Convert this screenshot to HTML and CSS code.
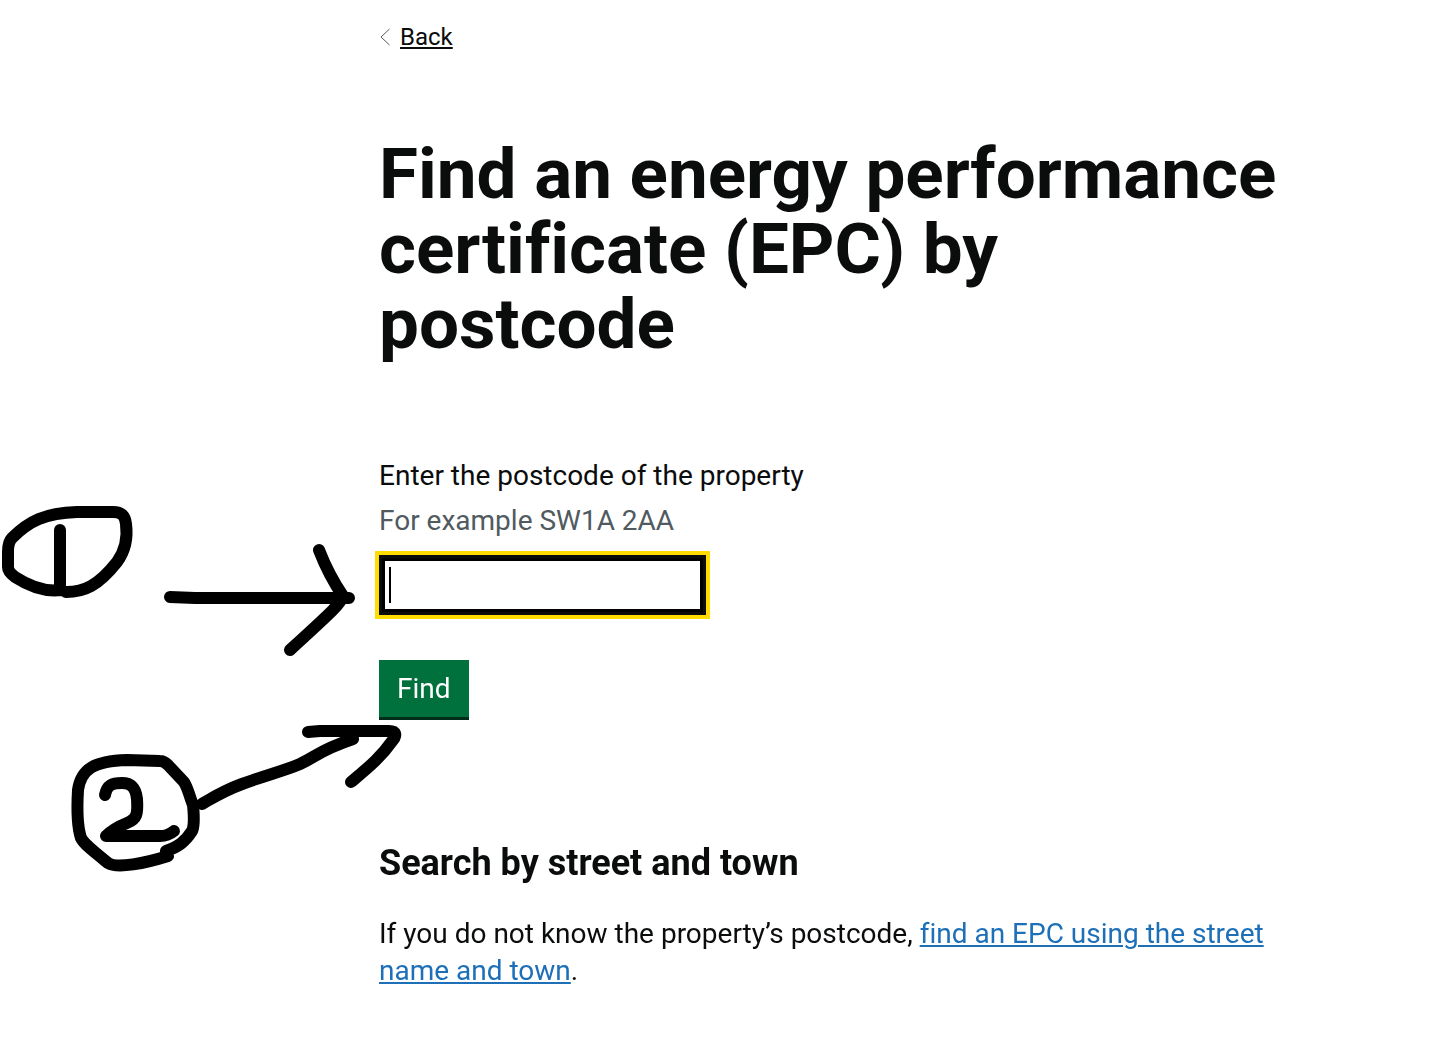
FILE: index.html
```
<!DOCTYPE html>
<html lang="en">
<head>
    <meta charset="UTF-8">
    <meta name="viewport" content="width=device-width, initial-scale=1.0">
    <title>Find an energy performance certificate (EPC) by postcode</title>
    <link rel="stylesheet" href="styles.css">
</head>
<body>
    <div class="container">
        <a href="#" class="back-link">
            <svg class="back-icon" width="11" height="18" viewBox="0 0 11 18" aria-hidden="true">
                <path d="M10.5 1 L2 9 L10.5 17"/>
            </svg>
            <span>Back</span>
        </a>

        <main>
            <h1>Find an energy performance certificate (EPC) by postcode</h1>

            <!-- Postcode Form -->
            <form class="postcode-form">
                <label for="postcode">Enter the postcode of the property</label>
                <div class="hint" id="postcodeHint">For example SW1A 2AA</div>
                <input type="text" id="postcode" aria-describedby="postcodeHint" autofocus>
                <button type="submit">Find</button>
            </form>

            <h2>Search by street and town</h2>
            <p>If you do not know the property’s postcode, <a href="#">find an EPC using the street name and town</a>.</p>
        </main>
    </div>

    <!-- Hand drawn steps -->
    <svg class="steps" width="420" height="900" viewBox="0 0 420 900" aria-hidden="true">
        <!-- Step 1 -->
        <path d="M66 592 C84 592 98 586 117 562 C125 551 128 539 126 524 C125 515 121 512 113 512 L77 512 C45 513 29 521 12 538 C9 541 8 547 8 552 L8 567 C8 571 11 574 15 577 C32 588 46 592 61 590"/>
        <path d="M60 530 L60 588"/>
        <path d="M170 597 L195 598 L349 598"/>
        <path d="M319 550 C324 563 332 580 343 596 C340 605 328 615 290 650"/>
        <!-- Step 2 -->
        <path d="M166 851 C178 847 185 842 192 831 C194 827 194 815 193 805 C190 798 188 788 184 782 L168 765 Q164 761 160 761 L127 760 C94 761 81 769 78 790 C77 807 77 826 81 838 C84 844 93 851 108 863 C117 869 146 863 168 856"/>
        <path d="M105 795 C107 785 112 783 122 783 C133 783 136 790 137 799 C138 814 137 819 127 823 C117 827 111 831 106 836 L160 836 Q168 836 174 831"/>
        <path d="M202 804 C214 797 223 791 242 784 C260 777 284 771 300 764 C317 756 320 750 353 739"/>
        <path d="M308 732 L320 731 L389 731 C396 731 397 735 393 740 C381 757 370 766 351 782"/>
    </svg>
</body>
</html>
```
FILE: styles.css
```
body {
    position: relative;
    margin: 0;
    font-family: Roboto, Arial, sans-serif;
    font-size: 28px;
    line-height: 37px;
    font-variant-ligatures: none;
    color: #0b0c0c;
    background-color: white;
}
.container {
    max-width: 912px;
    margin-left: 379px;
    padding: 18px 0 56px;
}
a {
    color: #1d70b8;
    text-decoration-thickness: 2px;
    text-underline-offset: 2px;
}
.back-link {
    display: inline-flex;
    align-items: center;
    gap: 10px;
    font-size: 24px;
    line-height: 30px;
    color: #0b0c0c;
}
.back-icon {
    fill: none;
    stroke: #505a5f;
}
h1 {
    margin: 81px 0 96px;
    font-size: 71px;
    line-height: 75px;
    font-weight: bold;
}
.postcode-form {
    display: flex;
    flex-direction: column;
    align-items: flex-start;
}
.hint {
    margin: 8px 0 16px;
    color: #505a5f;
}
.postcode-form input {
    box-sizing: border-box;
    width: 327px;
    height: 60px;
    margin-bottom: 45px;
    padding: 6px;
    border: 3px solid #0b0c0c;
    border-radius: 0;
    outline: 4px solid #ffdd00;
    box-shadow: inset 0 0 0 3px black;
    font: inherit;
    /* steady text cursor */
    caret-color: transparent;
    background: linear-gradient(black, black) 7px 9px / 2px 36px no-repeat white;
}
.postcode-form button {
    padding: 10px 18px;
    border: none;
    border-radius: 0;
    background-color: #00703c;
    box-shadow: 0 3px 0 #002d18;
    color: white;
    font: inherit;
    cursor: pointer;
}
h2 {
    margin: 124px 0 30px;
    font-size: 36px;
    line-height: 44px;
    font-weight: bold;
}
p {
    margin: 0;
}
.steps {
    position: absolute;
    top: 0;
    left: 0;
    fill: none;
    stroke: black;
    stroke-width: 12;
    stroke-linecap: round;
    stroke-linejoin: round;
    pointer-events: none;
}
```
